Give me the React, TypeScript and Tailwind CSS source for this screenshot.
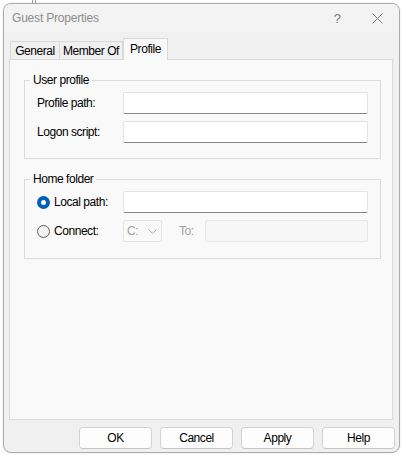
import React from "react";

const font = { fontFamily: '"Liberation Sans", Arial, sans-serif' };

function TextInput({ w = "w-[245px]" }: { w?: string }) {
  return (
    <div
      className={`${w} h-[22px] bg-white border border-[#e3e3e3] border-b-[#868686] rounded-[2px]`}
    />
  );
}

function Radio({ checked }: { checked?: boolean }) {
  if (checked) {
    return (
      <div className="w-[13px] h-[13px] rounded-full bg-[#005fb8] flex items-center justify-center shrink-0">
        <div className="w-[5px] h-[5px] rounded-full bg-white" />
      </div>
    );
  }
  return (
    <div className="w-[13px] h-[13px] rounded-full border border-[#5c5c5c] bg-[#f3f3f3] shrink-0" />
  );
}

function Group({ title, pb, children }: { title: string; pb: string; children: React.ReactNode }) {
  return (
    <fieldset className="border border-[#dcdcdc] ml-[14px] mr-[11px]">
      <legend className="ml-[5px] px-[3px] leading-[14px] text-black">{title}</legend>
      <div className={`pt-[5px] ${pb} pl-[12px] flex flex-col gap-[7px]`}>{children}</div>
    </fieldset>
  );
}

function Btn({ label }: { label: string }) {
  return (
    <div className="w-[73px] h-[22px] bg-[#fdfdfd] border border-[#d3d3d3] border-b-[#c4c4c4] rounded-[4px] flex items-center justify-center text-black">
      {label}
    </div>
  );
}

export default function App() {
  return (
    <div className="w-[402px] h-[455px] bg-white relative overflow-hidden" style={font}>
      <div className="absolute left-[32px] top-0 w-[4px] h-[3px] border-l border-r border-[#9a9a9a]" />
      <div className="relative ml-[3px] pt-[3px]">
        <div className="w-[397px] h-[450px] rounded-[8px] border border-[#ababab] overflow-hidden flex flex-col bg-[#f0f0f0] shadow-[0_0_2px_rgba(0,0,0,0.15)]">
          {/* title bar */}
          <div className="h-[28px] bg-[#f3f3f3] flex items-center shrink-0">
            <span className="pl-[8px] text-[12px] tracking-[-0.2px] text-[#8c8c8c]">Guest Properties</span>
            <span className="ml-auto mr-[31px] text-[13px] text-[#7a7a7a] leading-none">?</span>
            <svg width="11" height="11" viewBox="0 0 11 11" className="mr-[16px]">
              <path d="M0.5 0.5 L10.5 10.5 M10.5 0.5 L0.5 10.5" stroke="#7a7a7a" strokeWidth="1" fill="none" />
            </svg>
          </div>
          {/* body */}
          <div className="flex-1 flex flex-col text-[12px] tracking-[-0.45px]">
            <div className="pt-[6px] pl-[5px] pr-[6px]">
              <div className="flex items-end pl-[1px] h-[21px] relative z-10">
                <div className="w-[50px] h-[18px] border border-b-0 border-[#d9d9d9] bg-[#f0f0f0] flex items-center justify-center text-black">
                  General
                </div>
                <div className="w-[63px] h-[18px] border border-l-0 border-b-0 border-[#d9d9d9] bg-[#f0f0f0] flex items-center justify-center text-black">
                  Member Of
                </div>
                <div className="w-[45px] h-[22px] -mb-[1px] border border-b-0 border-[#d9d9d9] bg-[#f9f9f9] flex items-center justify-center pb-[2px] text-black">
                  Profile
                </div>
              </div>
              <div className="h-[361px] border border-[#d9d9d9] bg-[#f9f9f9] pt-[13px] flex flex-col gap-[13px]">
                <Group title="User profile" pb="pb-[15px]">
                  <div className="flex items-center">
                    <span className="w-[86px] text-black">Profile path:</span>
                    <TextInput />
                  </div>
                  <div className="flex items-center">
                    <span className="w-[86px] text-black">Logon script:</span>
                    <TextInput />
                  </div>
                </Group>
                <Group title="Home folder" pb="pb-[16px]">
                  <div className="flex items-center">
                    <div className="w-[86px] flex items-center gap-[4px] text-black">
                      <Radio checked />
                      <span>Local path:</span>
                    </div>
                    <TextInput />
                  </div>
                  <div className="flex items-center">
                    <div className="w-[86px] flex items-center gap-[4px] text-black">
                      <Radio />
                      <span>Connect:</span>
                    </div>
                    <div className="w-[39px] h-[22px] border border-[#e3e3e3] rounded-[2px] bg-[#f9f9f9] flex items-center pl-[3px] pr-[4px] text-[#a0a0a0]">
                      <span>C:</span>
                      <svg width="9" height="5" viewBox="0 0 9 5" className="ml-auto">
                        <path d="M0.5 0.5 L4.5 4.5 L8.5 0.5" stroke="#a8a8a8" strokeWidth="1" fill="none" />
                      </svg>
                    </div>
                    <span className="ml-[17px] w-[26px] text-[#a0a0a0]">To:</span>
                    <div className="w-[163px] h-[22px] border border-[#e6e6e6] rounded-[2px] bg-[#f7f7f7]" />
                  </div>
                </Group>
              </div>
            </div>
            <div className="flex justify-end gap-[8px] pt-[7px] pr-[4px]">
              <Btn label="OK" />
              <Btn label="Cancel" />
              <Btn label="Apply" />
              <Btn label="Help" />
            </div>
          </div>
        </div>
      </div>
    </div>
  );
}
